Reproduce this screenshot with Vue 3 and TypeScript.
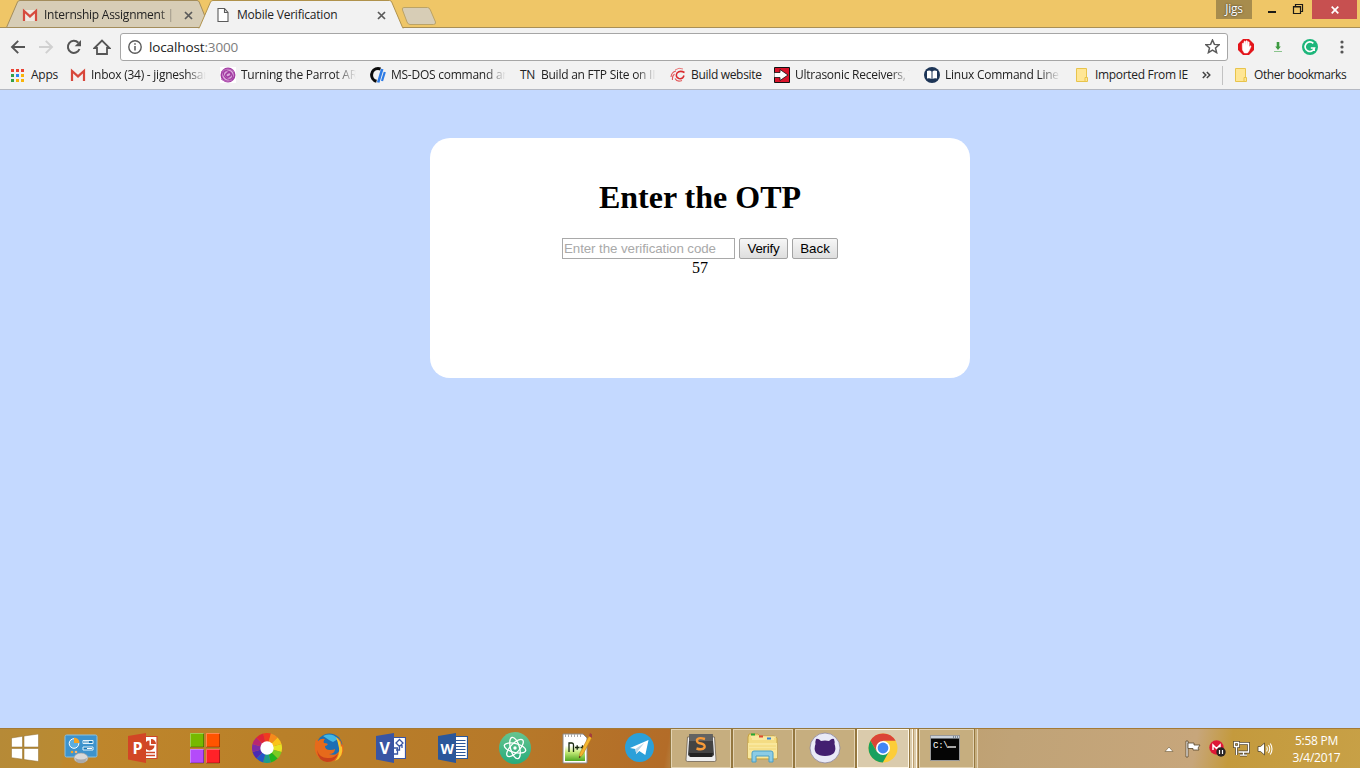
<script setup lang="ts">
import { ref } from 'vue'

interface Bookmark {
  id: string
  label: string
  fade?: boolean
}

const bookmarks: Bookmark[] = [
  { id: 'gmail', label: 'Inbox (34) - jigneshsar', fade: true },
  { id: 'parrot', label: 'Turning the Parrot AR.', fade: true },
  { id: 'msdos', label: 'MS-DOS command an', fade: true },
  { id: 'tn', label: 'Build an FTP Site on IIS', fade: true },
  { id: 'swirl', label: 'Build website' },
  { id: 'sparkfun', label: 'Ultrasonic Receivers, T', fade: true },
  { id: 'book', label: 'Linux Command Line C', fade: true },
  { id: 'folder', label: 'Imported From IE' },
]

const wheel = ['#f03a20', '#f58a1c', '#fbc31a', '#e8e322', '#7ccb22', '#1fb51f', '#1c9c8a', '#2356c8', '#4a2bb4', '#7d2ba8', '#b92672', '#df2437']
const wedge = (i: number): string => {
  const p = (k: number) => {
    const a = (k * Math.PI) / 6 - Math.PI / 2
    return `${(15 + 15 * Math.cos(a)).toFixed(2)} ${(15 + 15 * Math.sin(a)).toFixed(2)}`
  }
  return `M15 15L${p(i - 0.5)}A15 15 0 0 1 ${p(i + 0.5)}Z`
}

const code = ref('')
const secondsLeft = ref(57)
</script>

<template>
  <div class="screen">
    <header class="tabstrip">
      <div class="tab tab-idle">
        <svg class="tab-shape" width="204" height="28" viewBox="0 0 204 28">
          <path d="M.5 27.500L11.500 2Q12.200 .5 14 .5H191Q192.500 .5 193.200 2L203.500 27.500Z" fill="#d7cdb6" stroke="#a38d5c" />
        </svg>
        <svg class="fav" width="16" height="16" viewBox="0 0 16 16"><path d="M1 3h14v11H1z" fill="#eee9e2" /><path d="M2 14V4l6 5.4L14 4v10" fill="none" stroke="#d64b3e" stroke-width="2.2" /></svg>
        <span class="tab-title faded">Internship Assignment | N</span>
        <svg class="close" width="9" height="9" viewBox="0 0 9 9"><path d="M1 1l7 7M8 1L1 8" stroke="#5a5a5a" stroke-width="1.7" /></svg>
      </div>
      <div class="tab tab-active">
        <svg class="tab-shape" width="206" height="29" viewBox="0 0 206 29">
          <path d="M1 28.500L12.500 2Q13.200 .5 15 .5H191.500Q193 .5 193.700 2L205 28.500" fill="#f2f2f2" stroke="#b0924c" />
          <path d="M1.500 28.500H204.500" stroke="#f2f2f2" stroke-width="1.4" />
        </svg>
        <svg class="fav" width="16" height="16" viewBox="0 0 16 16"><path d="M3 1.5h6.500l3.500 4v9H3zM9.500 1.500v4H13" fill="#fff" stroke="#5b5b5b" stroke-width="1.100" /></svg>
        <span class="tab-title active-title">Mobile Verification</span>
        <svg class="close" width="9" height="9" viewBox="0 0 9 9"><path d="M1 1l7 7M8 1L1 8" stroke="#5a5a5a" stroke-width="1.7" /></svg>
      </div>
      <svg class="new-tab" width="36" height="18" viewBox="0 0 36 18"><path d="M3 .5H26.500Q28.500 .5 29.400 3L34.500 15Q35 17.500 32.500 17.500H9Q7 17.500 6 15L1.500 3Q.6.500 3 .5Z" fill="#d7cdb6" stroke="#bba366" /></svg>
      <div class="window-controls">
        <span class="profile">Jigs</span>
        <svg class="win-btn" width="34" height="19" viewBox="0 0 34 19"><path d="M16 12h8" stroke="#1c1a16" stroke-width="2" /></svg>
        <svg class="win-btn" width="26" height="19" viewBox="0 0 26 19"><path d="M7.500 6.500h7v7h-7zM7 7h8M9.500 6V4.500h7v7H15" fill="none" stroke="#1c1a16" stroke-width="1.200" /></svg>
        <span class="win-close"><svg width="8" height="8" viewBox="0 0 8 8"><path d="M.7.7l6.600 6.600M7.300.7L.7 7.300" stroke="#fff" stroke-width="1.7" /></svg></span>
      </div>
    </header>

    <nav class="toolbar">
      <div class="nav-icons">
        <svg width="16" height="16" viewBox="0 0 16 16"><path d="M15 8H2M8.200 1.800L2 8l6.200 6.200" fill="none" stroke="#555" stroke-width="1.9" /></svg>
        <svg width="16" height="16" viewBox="0 0 16 16"><path d="M1 8h13M7.800 1.800L14 8l-6.200 6.200" fill="none" stroke="#d0d0d0" stroke-width="1.9" /></svg>
        <svg width="16" height="16" viewBox="0 0 16 16"><path d="M13.500 10A6 6 0 1 1 12.300 3.800" fill="none" stroke="#555" stroke-width="2" /><path d="M15 1v6.300H8.700z" fill="#555" /></svg>
        <svg width="18" height="16" viewBox="0 0 18 16"><path d="M1.500 9L9 1.500 16.500 9H14v6H4V9z" fill="none" stroke="#555" stroke-width="1.8" /></svg>
      </div>
      <div class="omnibox">
        <svg width="14" height="14" viewBox="0 0 14 14"><circle cx="7" cy="7" r="6.200" fill="none" stroke="#5a5a5a" stroke-width="1.400" /><path d="M7 6v4.500M7 3.300v1.500" stroke="#5a5a5a" stroke-width="1.500" /></svg>
        <span class="url">localhost<span class="port">:3000</span></span>
        <svg class="star" width="15" height="15" viewBox="0 0 15 15"><path d="M7.500 1l1.900 4.400 4.700.4-3.600 3.100 1.100 4.700-4.100-2.500-4.100 2.500 1.100-4.700L.9 5.800l4.700-.4z" fill="none" stroke="#5a5a5a" stroke-width="1.500" /></svg>
      </div>
      <div class="extensions">
        <svg width="16" height="16" viewBox="0 0 16 16"><path d="M5 0h6l5 5v6l-5 5H5l-5-5V5z" fill="#e3151b" /><path d="M4.300 8V4.500q.8-1 1.300 0V7l.4-4.500q.8-1 1.400 0l.3 4 .3-4.500q.8-.9 1.400 0v5l.6-4q.8-.7 1.200.2v5l1-1.500q1 0 .8 1L11 12l-1.500 2H6.300L4.500 11z" fill="#fff" stroke="#fff" stroke-width=".5" /></svg>
        <svg width="12" height="12" viewBox="0 0 12 12"><path d="M4.700 1h2.600v4.500h1.500L6 9 3.200 5.500h1.500z" fill="#3d9a40" /><path d="M2 10.500h8" stroke="#8bc48d" /></svg>
        <svg width="16" height="16" viewBox="0 0 16 16"><circle cx="8" cy="8" r="8" fill="#1db67b" /><path d="M11.300 4.300A4.800 4.800 0 1 0 12.500 9H8.800M12 8.500l.2 3.500" fill="none" stroke="#fff" stroke-width="1.700" /></svg>
        <svg width="4" height="14" viewBox="0 0 4 14"><g fill="#555"><circle cx="2" cy="2" r="1.600" /><circle cx="2" cy="7" r="1.600" /><circle cx="2" cy="12" r="1.600" /></g></svg>
      </div>
    </nav>

    <nav class="bookmarks">
      <div class="apps">
        <svg width="13" height="13" viewBox="0 0 13 13"><path d="M0 0h3v3H0zM5 0h3v3H5zM10 0h3v3h-3z" fill="#ea4335" /><path d="M0 5h3v3H0zM0 10h3v3H0z" fill="#34a047" /><path d="M5 5h3v3H5z" fill="#2a86f3" /><path d="M10 5h3v3h-3zM5 10h3v3H5zM10 10h3v3h-3z" fill="#f9b408" /></svg>
        <span class="label">Apps</span>
      </div>
      <div v-for="b in bookmarks" :key="b.id" class="bookmark">
        <svg v-if="b.id === 'gmail'" width="16" height="16" viewBox="0 0 16 16"><path d="M1 3h14v11H1z" fill="#f3eeee" /><path d="M2 14V4l6 5.400L14 4v10" fill="none" stroke="#d8463a" stroke-width="2.200" /></svg>
        <svg v-else-if="b.id === 'parrot'" width="16" height="16" viewBox="0 0 16 16"><path fill="#fff" d="M0 0h16v16H0z" /><circle cx="8" cy="8" r="6.500" fill="#dcaadd" /><g fill="none" stroke="#a23ca2"><circle cx="8" cy="8" r="6.600" stroke-width="1.700" /><ellipse cx="8" cy="8" rx="5" ry="3.600" transform="rotate(40 8 8)" stroke-width="1.300" /><ellipse cx="8.500" cy="8" rx="2.800" ry="2" transform="rotate(-30 8 8)" stroke-width="1.500" /><path d="M1 5q7-6 13 0M1 12q5 4 11 1" stroke="#bf6dbf" /></g></svg>
        <svg v-else-if="b.id === 'msdos'" width="16" height="16" viewBox="0 0 16 16"><path d="M10.500 2Q9 1.500 8 1.500A6.500 6.500 0 0 0 6.500 14.300" fill="none" stroke="#0c0c0c" stroke-width="3" /><path d="M8.200 15.500L12.200 2" stroke="#2d7be5" stroke-width="2.600" /><path d="M12 14L14.800 5" stroke="#2d7be5" stroke-width="2.200" /></svg>
        <span v-else-if="b.id === 'tn'" class="tn">TN</span>
        <svg v-else-if="b.id === 'swirl'" width="16" height="16" viewBox="0 0 16 16"><g fill="none" stroke="#d92b2e"><path d="M14.500 5.500Q10 3 7 6q-2 4 2 5.500 4 .8 5-3" stroke-width="1.500" /><path d="M5 3q4-3 8-1" stroke="#e9797a" /><path d="M1 10Q1.500 5 6 4M2.500 13q-.5-4 2-6M5 11.500q2 4 7 2" stroke="#e2595b" stroke-width="1.100" /></g></svg>
        <svg v-else-if="b.id === 'sparkfun'" width="16" height="16" viewBox="0 0 16 16"><path d="M.5.5h15v15H.5z" fill="#d9142b" stroke="#111" /><path d="M0 5.500h6V2.500L14 8l-8 5.500v-3H0z" fill="#fff" stroke="#111" stroke-width=".8" /></svg>
        <svg v-else-if="b.id === 'book'" width="16" height="16" viewBox="0 0 16 16"><circle cx="8" cy="8" r="8" fill="#1d3557" /><path d="M3 4q3-1 4.500.5V12Q6 11 3 11.500zM13 4q-3-1-4.500.5V12q1.500-1 4.500-.5z" fill="#fff" /></svg>
        <svg v-else width="16" height="16" viewBox="0 0 16 16"><path d="M2.500 1.500h10v9h1v4h-11z" fill="#ffe694" stroke="#e8c44c" /><path d="M11 14v-3.500h2" fill="none" stroke="#e8c44c" /></svg>
        <span :class="['label', b.id, { faded: b.fade }]">{{ b.label }}</span>
      </div>
      <svg class="more" width="9" height="8" viewBox="0 0 9 8"><path d="M.8 1l3 3-3 3M4.800 1l3 3-3 3" fill="none" stroke="#444" stroke-width="1.500" /></svg>
      <div class="other">
        <svg width="16" height="16" viewBox="0 0 16 16"><path d="M2.500 1.500h10v9h1v4h-11z" fill="#ffe694" stroke="#e8c44c" /><path d="M11 14v-3.500h2" fill="none" stroke="#e8c44c" /></svg>
        <span class="label others">Other bookmarks</span>
      </div>
    </nav>

    <main class="page">
      <section class="card">
        <h1>Enter the OTP</h1>
        <form class="otp" @submit.prevent>
          <input v-model="code" type="text" placeholder="Enter the verification code" />
          <button type="submit" class="verify">Verify</button>
          <button type="button" class="back">Back</button>
        </form>
        <div class="timer">{{ secondsLeft }}</div>
      </section>
    </main>

    <footer class="taskbar">
      <div class="start">
        <svg width="28" height="28" viewBox="0 0 28 28"><path d="M.5 4L11.500 2.300V13H.5zM13 2L27.500 0v13H13zM.5 14.500h11v10.700L.5 23.700zM13 14.500h14.500v13L13 25.500z" fill="#fff" stroke="#8f6a2b" stroke-width=".5" /></svg>
      </div>
      <div class="task">
        <svg width="34" height="32" viewBox="0 0 34 32"><rect x="1" y="3" width="32" height="22" rx="1.500" fill="#3d93cd" stroke="#8bc2e2" /><circle cx="10" cy="11.500" r="4.800" fill="#5caee0" stroke="#fff" /><path d="M10 11V5.500a5.500 5.500 0 0 1 5.500 5.500z" fill="#f5a423" /><path d="M19 8.500h10v3H19zM19 15h10v3H19z" fill="#1677b5" stroke="#e2f3fc" /><path d="M20 9.500h5v1h-5zM23 16h5v1h-5z" fill="#fff" /><circle cx="8" cy="20" r="1.300" fill="#f5a423" /><circle cx="12" cy="20" r="1.300" fill="#ffb56b" /><ellipse cx="17" cy="26" rx="7" ry="5" fill="#d8d8d8" stroke="#999" stroke-width=".6" /><path d="M11 26q6 3 12 0-1 5-6 5t-6-5z" fill="#a9a9a9" /></svg>
      </div>
      <div class="task">
        <svg width="30" height="30" viewBox="0 0 30 30"><path d="M16 3.500h13v22H16z" fill="#fff" stroke="#d04626" stroke-width="1.200" /><path d="M21.500 7.500v5h5a5 5 0 1 1-5-5z" fill="#d04626" /><path d="M23 6v5h5a5 5 0 0 0-5-5z" fill="#d04626" /><path d="M18 19.500h9M18 22.500h9" stroke="#d04626" stroke-width="1.300" /><path d="M0 3L18 0v30L0 26.500z" fill="#d24625" /><text x="4.500" y="21" class="office">P</text></svg>
      </div>
      <div class="task">
        <svg width="32" height="32" viewBox="0 0 32 32"><path d="M1 1h14v14H1z" fill="#76b900" /><path d="M17 1h14v14H17z" fill="#ff5400" /><path d="M1 17h14v14H1z" fill="#b44bfa" /><path d="M17 17h14v14H17z" fill="#ff2228" /><path d="M14.500 1v14H1M30.500 1v14H17M14.500 17v14H1M30.500 17v14H17" fill="none" stroke="#000" stroke-opacity=".3" /><path d="M1.500 15V1.500H15M17.500 15V1.500H31M1.500 31V17.500H15M17.500 31V17.500H31" fill="none" stroke="#fff" stroke-opacity=".3" /></svg>
      </div>
      <div class="task">
        <svg width="30" height="30" viewBox="0 0 30 30"><path v-for="(c, i) in wheel" :key="c" :d="wedge(i)" :fill="c" /><circle cx="15" cy="15" r="6.700" fill="#fff" /></svg>
      </div>
      <div class="task">
        <svg width="30" height="30" viewBox="0 0 30 30"><circle cx="15.500" cy="13.500" r="13" fill="#1c6eb4" /><path d="M9 3q9-4 15 3l-5 3-4-2z" fill="#43b8e4" /><path d="M2 6q1 1 2 2 3-3 7-2-2 2-1 4 2 0 4 1-1 2-3 2 0 4 5 4 4 0 5-1 0 5-6 5 8 3 11-5 2-7-4-12 5 2 6 8l1-1q2 10-5 15-9 6-18 0Q-2 19 2 6z" fill="#e66a1b" /><path d="M22 4q5 4 5 10l1-1q2 11-7 15 5-6 4-13-1-6-3-11z" fill="#fbc52d" /><path d="M3 17q3 9 12 8 6 0 9-5-2 9-11 9-9-1-10-12z" fill="#c9421b" /></svg>
      </div>
      <div class="task">
        <svg width="30" height="30" viewBox="0 0 30 30"><path d="M16 4.500h13.500v21H16z" fill="#fff" stroke="#3955a3" stroke-width="1.200" /><path d="M23.500 6.500L27 10l-3.500 3.500L20 10zM23.500 13.500V17H20M18 15h3.500v6H18M26 12v3" fill="none" stroke="#3955a3" stroke-width="1.300" /><path d="M0 3L18 0v30L0 26.500z" fill="#3955a3" /><text x="3.500" y="21" class="office">V</text></svg>
      </div>
      <div class="task">
        <svg width="30" height="30" viewBox="0 0 30 30"><path d="M16 3.500h13.500v22H16z" fill="#fff" stroke="#2b579a" stroke-width="1.200" /><path d="M18 7.500h9.500M18 10.500h9.500M18 13.500h9.500M18 16.500h9.500M18 19.500h9.500M18 22.500h9.500" stroke="#2b579a" stroke-width="1.200" /><path d="M0 3L18 0v30L0 26.500z" fill="#2b579a" /><text x="2.500" y="20.500" class="office word">W</text></svg>
      </div>
      <div class="task">
        <svg width="32" height="32" viewBox="0 0 32 32"><defs><linearGradient id="atom" x2="0" y2="1"><stop stop-color="#67c58f" /><stop offset="1" stop-color="#27ab7c" /></linearGradient></defs><circle cx="16" cy="16" r="16" fill="url(#atom)" /><g fill="none" stroke="#fff" stroke-width="1.300"><ellipse cx="16" cy="16" rx="11" ry="4.500" transform="rotate(14 16 16)" /><ellipse cx="16" cy="16" rx="11" ry="4.500" transform="rotate(74 16 16)" /><ellipse cx="16" cy="16" rx="11" ry="4.500" transform="rotate(134 16 16)" /></g><circle cx="16" cy="16" r="1.700" fill="#fff" /></svg>
      </div>
      <div class="task">
        <svg width="30" height="32" viewBox="0 0 30 32"><defs><linearGradient id="npp" x2="0" y2="1"><stop offset=".3" stop-color="#fff" /><stop offset=".6" stop-color="#c6eb79" /><stop offset="1" stop-color="#4fa820" /></linearGradient></defs><path d="M1 2h20l4 4v25H1z" fill="#fff" stroke="#888" /><path d="M3 7h20v22H3z" fill="url(#npp)" /><path d="M3 3.500h18" stroke="#aaa" stroke-dasharray="1 2" stroke-width="3" /><path d="M7 20v-9h3q1.500 0 1.500 2v7M13 15.500h4.500M15.200 13.200v4.600M18.500 15.500h4M20.500 13.200v4.600" fill="none" stroke="#17280f" stroke-width="1.300" /><path d="M17 26l1-5L27 4l3 1.500L20.500 23z" fill="#f4b62f" stroke="#b87719" stroke-width=".6" /><path d="M27 4l1-3 3 2-1 3z" fill="#a33d3d" /><path d="M17 26l.4-2 1.500.9z" fill="#222" /></svg>
      </div>
      <div class="task">
        <svg width="29" height="29" viewBox="0 0 29 29"><circle cx="14.500" cy="14.500" r="14.500" fill="#2ba0d9" /><path d="M5 15L23.500 7l-3.200 15-6-4-3 3-1-5z" fill="#fff" /><path d="M10.300 16l9-6-6 7.500-2 3.500z" fill="#b9d5e6" /></svg>
      </div>
      <div class="task running">
        <svg width="32" height="30" viewBox="0 0 32 30"><path d="M2.500 4h27L31 27q0 1.500-1.500 1.500h-27Q1 28.500 1 27z" fill="#eee" stroke="#4b4033" stroke-width=".6" /><path d="M4.500 1h23L29 22l-2 2H5l-2-2z" fill="#434343" /><path d="M4.500 1h23L28 8H4z" fill="#626262" /><path d="M4 20l1.500 4h21l1.500-4z" fill="#222" /><path d="M20 6q-7-2-8 1-.5 3 4 3.500 4.500 1 3.500 4-2 3-8 1" fill="none" stroke="#f79a39" stroke-width="2.400" /></svg>
      </div>
      <div class="task running">
        <svg width="32" height="30" viewBox="0 0 32 30"><path d="M1 4l1-3h9l2 2h14l3 2v21H1z" fill="#f4dc83" stroke="#c6a242" /><path d="M4 4h25M5 6h22" stroke="#fff4bc" /><path d="M4 1.500h4" stroke="#25a836" stroke-width="2" /><path d="M12 3.500h4" stroke="#de4a32" stroke-width="2" /><path d="M20 5.500h4" stroke="#3383d2" stroke-width="2" /><path d="M1 10h29v15H1z" fill="#f9e79c" /><path d="M2 13h27M2 16h27" stroke="#f2d675" /><path d="M5 29v-9q0-2 2-2h17q2 0 2 2v9h-4v-6H9v6z" fill="#8bcce6" stroke="#4b9fc5" /></svg>
      </div>
      <div class="task running">
        <svg width="32" height="32" viewBox="0 0 32 32"><circle cx="16" cy="16" r="15" fill="#e9eaf7" stroke="#8b86a0" stroke-width=".8" /><path d="M7 7q2-1 5 2 4-1 8 0 3-3 5-2 1 3 .5 5 2 5-.5 9-3 3-9 3t-9-3q-2.500-4-.5-9Q6 10 7 7z" fill="#432070" /></svg>
      </div>
      <div class="task running current">
        <svg width="30" height="30" viewBox="0 0 30 30"><circle cx="15" cy="15" r="14.500" fill="#fccd38" /><path d="M2.400 7.800A14.500 14.500 0 0 1 27.600 7.800H15L8.800 18.600z" fill="#db4437" /><path d="M2.400 7.800L8.700 18.600H15L21 18.600 14.800 29.500A14.500 14.500 0 0 1 2.400 7.800z" fill="#18a05f" /><circle cx="15" cy="15" r="7" fill="#fff" /><circle cx="15" cy="15" r="5.400" fill="#4285f4" /></svg>
      </div>
      <i class="stack light"></i><i class="stack light last"></i>
      <div class="task running console">
        <svg width="30" height="26" viewBox="0 0 30 26"><path d="M.5.500h29v25H.5z" fill="#050505" stroke="#999" /><path d="M1 1h28v2.500H1z" fill="#c9d0d8" /><path d="M23 2h1M25 2h1M27 2h1" stroke="#345" /><text x="3" y="12.500" class="prompt">C:\</text><path d="M18 12h8" stroke="#fff" stroke-width="1.300" /></svg>
      </div>
      <i class="stack"></i>
      <div class="tray">
        <svg width="10" height="6" viewBox="0 0 10 6"><path d="M1 5.500L5 1l4 4.500z" fill="#fff" stroke="#6d5a39" stroke-width=".6" /></svg>
        <svg width="18" height="18" viewBox="0 0 18 18"><path d="M2 1h2v16H2z" fill="#fff" stroke="#55452b" stroke-width=".8" /><path d="M4 3h6v2h6l-2 3 1 2H9V8.500H4z" fill="#fff" stroke="#55452b" stroke-width=".8" /></svg>
        <svg width="17" height="17" viewBox="0 0 17 17"><circle cx="7.500" cy="7.500" r="7.200" fill="#df1737" /><path d="M4 10V5l3.500 3.500L11 5v5" fill="none" stroke="#fff" stroke-width="1.500" /><circle cx="12" cy="12" r="4.700" fill="#2a2422" /><path d="M10.500 10v4M13.500 10v4" stroke="#fff" stroke-width="1.200" /></svg>
        <svg width="17" height="16" viewBox="0 0 17 16"><g fill="none" stroke="#54462c" stroke-width="2.800"><path d="M6.500 2.500h9v8.500H5.500M10.500 11v3M7 14.200h7" /><path d="M1.500 1.500h4v4h-4zM3.500 6v8" /></g><g fill="none" stroke="#fff" stroke-width="1.300"><path d="M6.500 2.500h9v8.500H5.500M10.500 11v3M7 14.200h7" /><path d="M1.500 1.500h4v4h-4zM3.500 6v8" /></g></svg>
        <svg width="16" height="16" viewBox="0 0 16 16"><path d="M1 5.500h2.500L7.500 2v12l-4-3.500H1z" fill="#fff" stroke="#54462c" stroke-width=".8" /><path d="M9.500 5.500q1.500 2.500 0 5M11.500 4q2.500 4 0 8M13.300 2.500q3.400 5.500 0 11" fill="none" stroke="#fff" stroke-width="1.100" /></svg>
      </div>
      <div class="clock"><span>5:58 PM</span><span>3/4/2017</span></div>
    </footer>
  </div>
</template>

<style>
body {
  margin: 0;
  overflow: hidden;
}
</style>

<style scoped>
.screen {
  width: 1360px;
  height: 768px;
  display: flex;
  flex-direction: column;
  font: 12px 'Open Sans', 'Noto Sans', sans-serif;
  letter-spacing: -0.25px;
  color: #222;
  background: #c4d9ff;
}
svg {
  display: block;
  flex: none;
}
span {
  white-space: nowrap;
}
.faded {
  -webkit-mask-image: linear-gradient(90deg, #000 calc(100% - 20px), transparent);
  mask-image: linear-gradient(90deg, #000 calc(100% - 20px), transparent);
}

/* tab strip */
.tabstrip {
  height: 28px;
  flex: none;
  display: flex;
  align-items: flex-start;
  background: #efc667;
  box-shadow: inset 0 -1px #a98f55;
}
.tab {
  position: relative;
  height: 28px;
  box-sizing: border-box;
  display: flex;
  align-items: center;
  padding: 2px 0 0 16px;
}
.tab-idle {
  width: 204px;
  margin-left: 6px;
}
.tab-active {
  width: 206px;
  margin-left: -12px;
  padding-left: 17px;
  z-index: 1;
}
.tab-shape {
  position: absolute;
  left: 0;
  top: 0;
}
.fav,
.tab-title,
.close {
  z-index: 1;
}
.tab-title {
  width: 134px;
  margin-left: 6px;
  padding-bottom: 2px;
  overflow: hidden;
}
.active-title {
  letter-spacing: -0.22px;
}
.close {
  margin-left: 6px;
}
.new-tab {
  margin: 7px 0 0 -3px;
}
.window-controls {
  margin-left: auto;
  display: flex;
  align-items: flex-start;
}
.profile {
  width: 36px;
  height: 19px;
  line-height: 18px;
  text-align: center;
  color: #fff;
  background: #a78c4d;
  text-shadow: 0 0 2px #222;
}
.win-close {
  width: 45px;
  height: 19px;
  margin-right: 3px;
  display: flex;
  align-items: center;
  justify-content: center;
  background: #c75050;
}

/* address row */
.toolbar {
  height: 37px;
  flex: none;
  display: flex;
  align-items: center;
  background: #f2f2f2;
}
.nav-icons {
  display: flex;
  gap: 12px;
  padding-left: 10px;
  width: 110px;
}
.nav-icons svg:last-child {
  margin-left: -1px;
}
.omnibox {
  width: 1108px;
  height: 28px;
  box-sizing: border-box;
  display: flex;
  align-items: center;
  padding: 0 7px 0 7px;
  background: #fff;
  border: 1px solid #a6a6a6;
  border-radius: 3px;
}
.url {
  margin-left: 7px;
  font-size: 13.5px;
  letter-spacing: -0.13px;
}
.port {
  color: #7d7d7d;
}
.star {
  margin-left: auto;
}
.extensions {
  flex: 1;
  display: flex;
  align-items: center;
  padding-left: 10px;
}
.extensions svg:nth-child(2) {
  margin-left: 18px;
}
.extensions svg:nth-child(3) {
  margin-left: 18px;
}
.extensions svg:nth-child(4) {
  margin-left: 22px;
}

/* bookmarks */
.bookmarks {
  height: 25px;
  flex: none;
  box-sizing: border-box;
  display: flex;
  align-items: center;
  padding: 0 14px 4px 11px;
  background: #f2f2f2;
  border-bottom: 1px solid #b5b9c2;
}
.apps {
  width: 45px;
  display: flex;
  align-items: center;
  gap: 7px;
}
.bookmark {
  display: flex;
  align-items: center;
  gap: 5px;
  margin-left: 14px;
}
.label {
  padding-bottom: 2px;
}
.label.faded {
  width: 115px;
  overflow: hidden;
}
.label.swirl {
  width: 69px;
  letter-spacing: -0.32px;
}
.label.folder {
  width: 93px;
  letter-spacing: -0.32px;
}
.label.others {
  width: 92px;
  letter-spacing: -0.42px;
}
.tn {
  width: 16px;
  padding-bottom: 2px;
}
.more {
  margin-left: 14px;
}
.other {
  margin-left: auto;
  display: flex;
  align-items: center;
  gap: 5px;
  padding-left: 10px;
  border-left: 1px solid #c2c2c2;
}

/* web page */
.page {
  flex: 1;
  display: flex;
  justify-content: center;
  align-items: flex-start;
  padding: 48px 0 0 40px;
}
.card {
  width: 540px;
  height: 240px;
  box-sizing: border-box;
  padding-top: 20px;
  border-radius: 20px;
  background: #fff;
  text-align: center;
  font: 16px 'Liberation Serif', serif;
  letter-spacing: 0;
  color: #000;
}
h1 {
  margin: 21.440px 0 22px;
  font-size: 32px;
  line-height: 37px;
}
.otp {
  display: flex;
  justify-content: center;
  gap: 4px;
}
.otp input,
.otp button {
  box-sizing: border-box;
  height: 21px;
  margin: 0;
  font: 13.333px 'Liberation Sans', sans-serif;
}
.otp input {
  width: 173px;
  padding: 1px;
  border: 1px solid #a9a9a9;
}
.otp input::placeholder {
  color: #a9a9a9;
  letter-spacing: -0.08px;
}
.otp button {
  padding: 0;
  color: #000;
  border: 1px solid #a3a3a3;
  border-radius: 2px;
  background: linear-gradient(#f6f6f6, #dedede);
}
.otp .verify {
  width: 49px;
  letter-spacing: -0.2px;
}
.otp .back {
  width: 46px;
}
.timer {
  line-height: 18px;
}

/* taskbar */
.taskbar {
  height: 40px;
  flex: none;
  box-sizing: border-box;
  display: flex;
  align-items: center;
  border-top: 1px solid #a47a36;
  background: linear-gradient(100deg, #b68a37 0, #b98a32 64px, #bf872c 68px, #b98029 280px, #b67829 520px, #b36c28 660px, #b89457 676px, #c0a377 1000px, #c7a67b 1180px, #c49a3d 1215px, #c8a147 1360px);
}
.start {
  width: 50px;
  padding-bottom: 2px;
  display: flex;
  justify-content: center;
}
.task {
  width: 62px;
  height: 39px;
  box-sizing: border-box;
  padding-bottom: 2px;
  display: flex;
  align-items: center;
  justify-content: center;
}
.running {
  width: 60px;
  margin: 0 1px;
  border: 1px solid #e3d3b3;
  box-shadow: 0 0 0 1px #94773f;
  background: #c6ae7f;
}
.current {
  width: 52px;
  background: #dacbac;
  border-color: #fff8e8;
}
.stack {
  width: 3px;
  height: 39px;
  box-sizing: border-box;
  border-right: 1px solid #e3d3b3;
  background: #c6ae7f;
}
.stack.light {
  background: #dacbac;
  border-color: #fff8e8;
}
.last {
  margin-left: 1px;
}
.console {
  width: 55px;
  margin-left: 2px;
  padding-right: 4px;
}
.office {
  font: bold 16px 'Open Sans', sans-serif;
  fill: #fff;
}
.word {
  font-size: 14px;
}
.prompt {
  font: 9px 'Liberation Mono', monospace;
  fill: #fff;
}
.tray {
  margin-left: auto;
  display: flex;
  align-items: center;
  gap: 7px;
}
.tray svg:nth-child(2) {
  margin-left: 3px;
}
.clock {
  width: 87px;
  display: flex;
  flex-direction: column;
  align-items: center;
  line-height: 17px;
  color: #fff;
  padding-top: 1px;
}
</style>
